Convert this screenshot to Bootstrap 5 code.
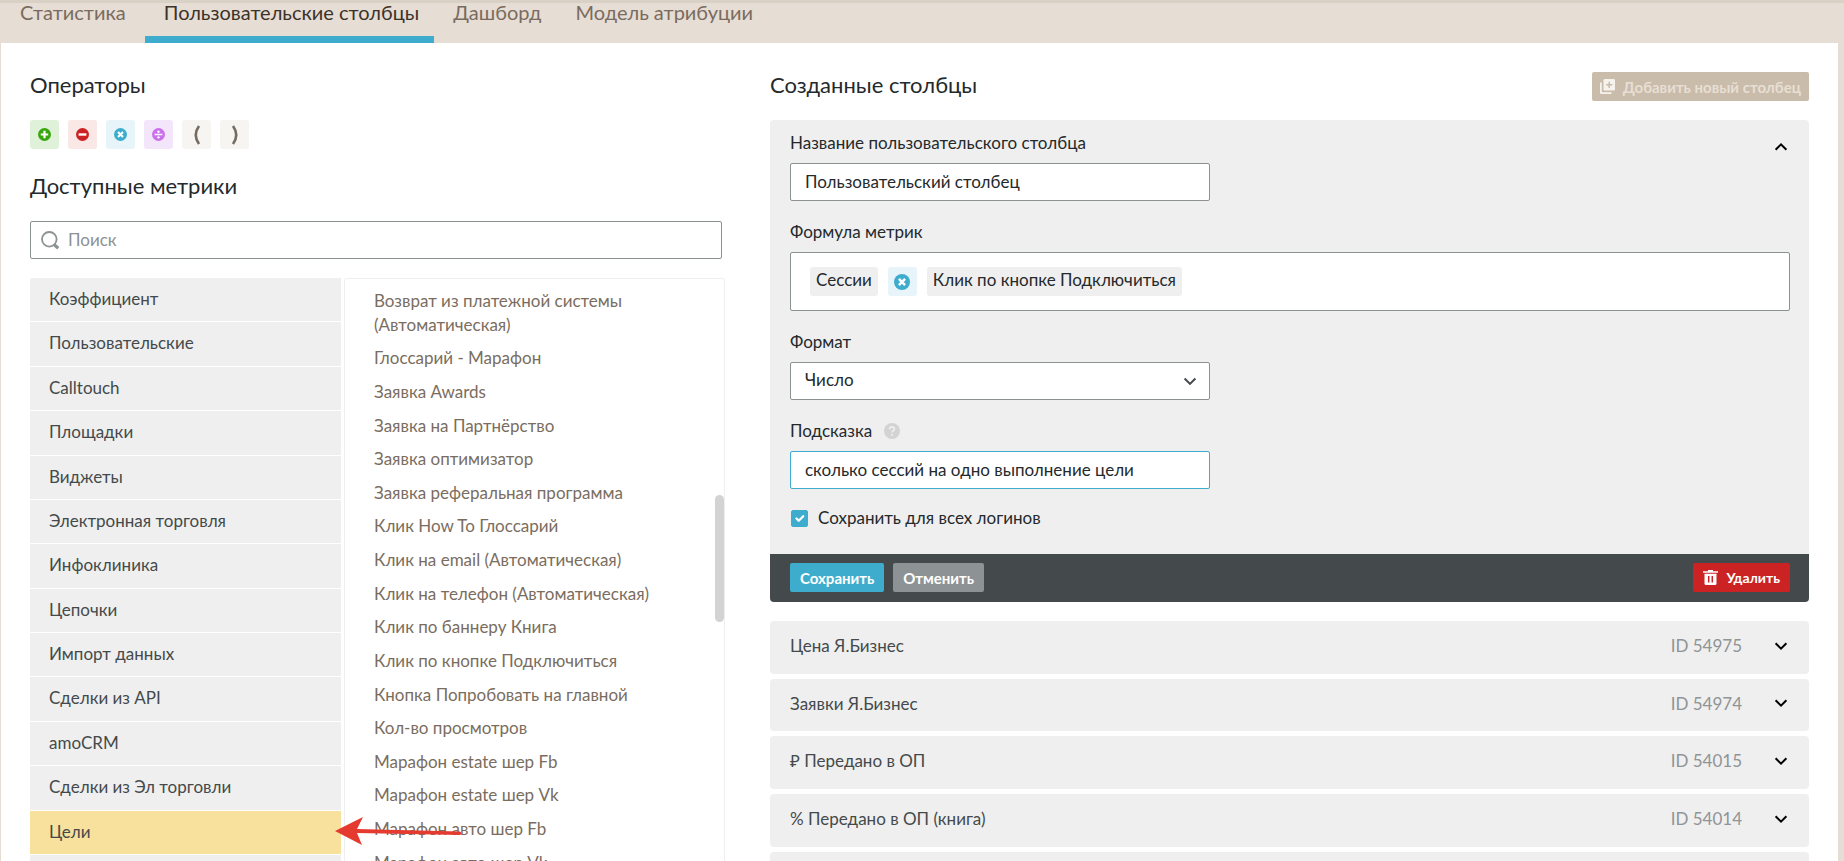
<!DOCTYPE html>
<html lang="ru">
<head>
<meta charset="utf-8">
<meta name="viewport" content="width=device-width, initial-scale=1">
<title>Пользовательские столбцы</title>
<link href="https://cdn.jsdelivr.net/npm/bootstrap@5.3.0/dist/css/bootstrap.min.css" rel="stylesheet">
<style>
  :root { --beige: #e6ddd4; --accent: #3eadcd; --soft: #efefef; --dark: #444a4b; }
  body { font-family: Lato, "Noto Sans", sans-serif; font-size: 17px; line-height: 24px; color: #24292c; background: var(--beige); }
  .top-tabs { border-top: 3px solid #dad1c6; height: 43px; font-size: 20px; line-height: 18px; }
  .top-tabs a { color: #7a6b5e; padding: 0 15px 0 19px; border-bottom: 7px solid transparent; white-space: nowrap; }
  .top-tabs a:first-child { padding: 0 19px 0 20px; }
  .top-tabs a.active { color: #3d3229; border-color: var(--accent); }
  .sheet { background: #fff; margin: 0 6px 0 1px; padding: 28px 29px 0; }
  .columns { display: grid; grid-template-columns: 695fr 1039fr; gap: 45px; }
  h2 { font-size: 22px; line-height: 28px; font-weight: 400; margin: 0; }
  .ops { gap: 9px; margin: 21px 0 23px; }
  .op { width: 29px; height: 29px; border: 0; border-radius: 3px; padding: 0; display: inline-flex; align-items: center; justify-content: center; }
  .op-plus { background: #e0f1da; color: #3aa60f; }
  .op-minus { background: #f9e8e6; color: #cb2323; }
  .op-times { background: #e7f5fa; color: var(--accent); }
  .op-divide { background: #f3e6fa; color: #cb70ec; }
  .op-paren { background: #f6f5f2; color: #766b60; }

  .field { height: 38px; border: 1px solid #8c9192; border-radius: 2px; font-size: 17px; line-height: 24px; padding: 5px 14px 7px; color: #24292c; }
  .field.current { border-color: var(--accent); }
  .field::placeholder { color: #8c9192; }
  .search { margin: 21px 3px 0 0; position: relative; }
  .search svg { position: absolute; left: 11px; top: 10px; }
  .search .field { padding-left: 37px; }

  .lists { gap: 3px; margin-top: 19px; }
  .groups { width: 311px; }
  .groups li { background: var(--soft); border-bottom: 1px solid #fff; line-height: 1.375; padding: 9px 19px 11px; position: relative; }
  .groups li:first-child { border-top-left-radius: 3px; }
  .groups li:last-child { height: 44px; }
  .groups a { color: var(--dark); }
  .groups li.chosen { background: #f8e09d; }
  .pointer { position: absolute; left: calc(100% - 6px); top: 6px; z-index: 2; }
  .metrics { border: 1px solid var(--soft); border-radius: 3px; padding: 5px 29px; position: relative; }
  .metrics li { line-height: 1.39; padding: 5px 0; }
  .metrics a { color: #7a6d60; }
  .thumb { position: absolute; right: 0; top: 216px; width: 9px; height: 127px; border-radius: 5px; background: #d3d3d3; }

  .act { height: 29px; border: 0; border-radius: 2px; padding: 0 10px; font-size: 15px; line-height: 20px; font-weight: 700; color: #fff; display: inline-flex; align-items: center; white-space: nowrap; }
  .act-add { background: #cabcaa; color: #e8dfd4; margin-top: 1px; padding: 0 8px; }
  .act-add svg, .act-del svg { margin-right: 8px; }
  .act-save { background: var(--accent); }
  .act-cancel { background: #8d9294; margin-left: 9px; }
  .act-del { background: #cb2323; font-size: 14px; }

  .editor { background: var(--soft); border-radius: 4px; margin-top: 19px; overflow: hidden; }
  .editor-body { padding: 11px 19px 24px 20px; display: grid; row-gap: 19px; }
  .editor label { display: block; }
  .half { width: 42%; }
  .half > .field, .formula { margin-top: 8px; }
  .fold { border: 0; background: none; padding: 0; line-height: 0; }
  .editor .fold { margin: 9px 2px 0 0; }
  .formula { height: 59px; background: #fff; border: 1px solid #8c9192; border-radius: 2px; padding: 14px 19px; gap: 10px; }
  .chip { background: var(--soft); border-radius: 3px; height: 29px; padding: 1px 6px; }
  .form-select.field { background-image: url("data:image/svg+xml,%3Csvg xmlns='http://www.w3.org/2000/svg' viewBox='0 0 14 14'%3E%3Cpath d='M1.600 4.500L7 9.900l5.400-5.400' fill='none' stroke='%23444a4b' stroke-width='2'/%3E%3C/svg%3E"); background-size: 14px 14px; background-position: right 12px center; }
  .help { margin-left: 12px; }
  .save-all { margin-top: -2px; }
  .tick.form-check-input { width: 17px; height: 17px; margin: 0 10px 0 1px; border-radius: 2px; flex: none; }
  .tick:checked { background-color: var(--accent); border-color: var(--accent); }
  .editor-foot { background: var(--dark); padding: 9px 19px 10px 20px; }

  .saved { margin-top: 19px; display: grid; gap: 5px; }
  .saved li { background: var(--soft); color: var(--dark); border-radius: 4px; line-height: 1.39; padding: 13px 21px 16px 20px; }
  .saved .num { color: #8f9496; margin-right: 32px; }
</style>
</head>
<body class="vh-100 overflow-hidden">
<svg class="d-none" aria-hidden="true">
  <symbol id="i-plus" viewBox="0 0 12 12"><circle cx="6" cy="6" r="6" fill="currentColor"/><path d="M6 2.6v6.8M2.6 6h6.8" stroke="#fff" stroke-width="2"/></symbol>
  <symbol id="i-minus" viewBox="0 0 12 12"><circle cx="6" cy="6" r="6" fill="currentColor"/><path d="M2.4 6h7.2" stroke="#fff" stroke-width="2.2"/></symbol>
  <symbol id="i-times" viewBox="0 0 12 12"><circle cx="6" cy="6" r="6" fill="currentColor"/><path d="M3.7 3.7l4.6 4.6M8.3 3.7L3.7 8.3" stroke="#fff" stroke-width="1.9"/></symbol>
  <symbol id="i-divide" viewBox="0 0 12 12"><circle cx="6" cy="6" r="6" fill="currentColor"/><path d="M2.4 6h7.2" stroke="#fff" stroke-width="1.4"/><circle cx="6" cy="3.4" r="1.1" fill="#fff"/><circle cx="6" cy="8.6" r="1.1" fill="#fff"/></symbol>
  <symbol id="i-down" viewBox="0 0 14 14"><path d="M1.6 4.2L7 9.6l5.4-5.4" fill="none" stroke="#000" stroke-width="2"/></symbol>
  <symbol id="i-up" viewBox="0 0 14 14"><path d="M1.6 9.8L7 4.4l5.4 5.4" fill="none" stroke="#000" stroke-width="2"/></symbol>
</svg>

<nav class="top-tabs d-flex">
  <a class="text-decoration-none" href="#">Статистика</a>
  <a class="text-decoration-none active" href="#" aria-current="page">Пользовательские столбцы</a>
  <a class="text-decoration-none" href="#">Дашборд</a>
  <a class="text-decoration-none" href="#">Модель атрибуции</a>
</nav>

<main class="sheet min-vh-100">
  <div class="columns">
    <section>
      <h2>Операторы</h2>
      <div class="ops d-flex">
        <button type="button" class="op op-plus" aria-label="Плюс"><svg width="13" height="13"><use href="#i-plus"/></svg></button>
        <button type="button" class="op op-minus" aria-label="Минус"><svg width="13" height="13"><use href="#i-minus"/></svg></button>
        <button type="button" class="op op-times" aria-label="Умножить"><svg width="13" height="13"><use href="#i-times"/></svg></button>
        <button type="button" class="op op-divide" aria-label="Разделить"><svg width="13" height="13"><use href="#i-divide"/></svg></button>
        <button type="button" class="op op-paren" aria-label="Открыть скобку"><svg width="8" height="20" viewBox="0 0 8 20"><path d="M6 1Q-.5 10 6 19" fill="none" stroke="currentColor" stroke-width="2.6"/></svg></button>
        <button type="button" class="op op-paren" aria-label="Закрыть скобку"><svg width="8" height="20" viewBox="0 0 8 20"><path d="M2 1q6.5 9 0 18" fill="none" stroke="currentColor" stroke-width="2.6"/></svg></button>
      </div>
      <h2>Доступные метрики</h2>
      <div class="search">
        <svg width="19" height="19" viewBox="0 0 19 19" fill="none" stroke="#8c9192"><circle cx="8.3" cy="8.3" r="7.3" stroke-width="1.8"/><path d="M13.2 13.6l4 3.6" stroke-width="3.2"/></svg>
        <input class="form-control field" type="search" placeholder="Поиск" aria-label="Поиск">
      </div>
      <div class="lists d-flex">
        <ul class="groups list-unstyled flex-shrink-0 mb-0">
          <li><a class="text-decoration-none" href="#">Коэффициент</a></li>
          <li><a class="text-decoration-none" href="#">Пользовательские</a></li>
          <li><a class="text-decoration-none" href="#">Calltouch</a></li>
          <li><a class="text-decoration-none" href="#">Площадки</a></li>
          <li><a class="text-decoration-none" href="#">Виджеты</a></li>
          <li><a class="text-decoration-none" href="#">Электронная торговля</a></li>
          <li><a class="text-decoration-none" href="#">Инфоклиника</a></li>
          <li><a class="text-decoration-none" href="#">Цепочки</a></li>
          <li><a class="text-decoration-none" href="#">Импорт данных</a></li>
          <li><a class="text-decoration-none" href="#">Сделки из API</a></li>
          <li><a class="text-decoration-none" href="#">amoCRM</a></li>
          <li><a class="text-decoration-none" href="#">Сделки из Эл торговли</a></li>
          <li class="chosen"><a class="text-decoration-none" href="#">Цели</a>
            <svg class="pointer" width="128" height="28" viewBox="0 0 128 28" fill="#e53a30" aria-hidden="true"><path d="M0 14L28 0l-6 12 103 2.500q3 1.800 0 3.500L22 16l5 12z"/></svg>
          </li>
          <li></li>
        </ul>
        <div class="metrics flex-grow-1">
          <ul class="list-unstyled mb-0">
            <li><a class="text-decoration-none" href="#">Возврат из платежной системы<br>(Автоматическая)</a></li>
            <li><a class="text-decoration-none" href="#">Глоссарий - Марафон</a></li>
            <li><a class="text-decoration-none" href="#">Заявка Awards</a></li>
            <li><a class="text-decoration-none" href="#">Заявка на Партнёрство</a></li>
            <li><a class="text-decoration-none" href="#">Заявка оптимизатор</a></li>
            <li><a class="text-decoration-none" href="#">Заявка реферальная программа</a></li>
            <li><a class="text-decoration-none" href="#">Клик How To Глоссарий</a></li>
            <li><a class="text-decoration-none" href="#">Клик на email (Автоматическая)</a></li>
            <li><a class="text-decoration-none" href="#">Клик на телефон (Автоматическая)</a></li>
            <li><a class="text-decoration-none" href="#">Клик по баннеру Книга</a></li>
            <li><a class="text-decoration-none" href="#">Клик по кнопке Подключиться</a></li>
            <li><a class="text-decoration-none" href="#">Кнопка Попробовать на главной</a></li>
            <li><a class="text-decoration-none" href="#">Кол-во просмотров</a></li>
            <li><a class="text-decoration-none" href="#">Марафон estate шер Fb</a></li>
            <li><a class="text-decoration-none" href="#">Марафон estate шер Vk</a></li>
            <li><a class="text-decoration-none" href="#">Марафон авто шер Fb</a></li>
            <li><a class="text-decoration-none" href="#">Марафон авто шер Vk</a></li>
          </ul>
          <div class="thumb"></div>
        </div>
      </div>
    </section>

    <section>
      <div class="d-flex justify-content-between">
        <h2>Созданные столбцы</h2>
        <button type="button" class="act act-add"><svg width="15" height="15" viewBox="0 0 15 15"><path d="M0 3.500h1.800v9.700h9.700V15H1.500Q0 15 0 13.500z" fill="#f6f2ed"/><rect x="3.500" width="11.500" height="11.500" rx="1.300" fill="#f6f2ed"/><path d="M9.200 2.700v6.200M6.100 5.800h6.200" stroke="#cabcaa" stroke-width="1.500"/></svg>Добавить новый столбец</button>
      </div>

      <form class="editor" onsubmit="return false">
        <div class="editor-body">
          <div class="d-flex justify-content-between">
            <div class="half">
              <label for="col-name">Название пользовательского столбца</label>
              <input id="col-name" class="form-control field" type="text" value="Пользовательский столбец">
            </div>
            <button type="button" class="fold align-self-start" aria-label="Свернуть"><svg width="14" height="14"><use href="#i-up"/></svg></button>
          </div>
          <div>
            <div>Формула метрик</div>
            <div class="formula d-flex">
              <span class="chip">Сессии</span>
              <span class="op op-times"><svg width="16" height="16"><use href="#i-times"/></svg></span>
              <span class="chip">Клик по кнопке Подключиться</span>
            </div>
          </div>
          <div class="half">
            <label for="col-format">Формат</label>
            <select id="col-format" class="form-select field"><option>Число</option></select>
          </div>
          <div class="half">
            <label for="col-hint" class="d-flex align-items-center">Подсказка
              <svg class="help" width="16" height="16" viewBox="0 0 16 16"><circle cx="8" cy="8" r="8" fill="#d3d3d3"/><path d="M5.600 6.300q0-2.500 2.400-2.500t2.400 2.100q0 1.100-1.200 1.800T8 9.600" fill="none" stroke="#efefef" stroke-width="1.700"/><circle cx="8" cy="12" r="1.100" fill="#efefef"/></svg>
            </label>
            <input id="col-hint" class="form-control field current" type="text" value="сколько сессий на одно выполнение цели">
          </div>
          <div class="save-all d-flex align-items-center">
            <input id="col-all" class="form-check-input tick" type="checkbox" checked>
            <label for="col-all">Сохранить для всех логинов</label>
          </div>
        </div>
        <div class="editor-foot d-flex">
          <button type="submit" class="act act-save">Сохранить</button>
          <button type="button" class="act act-cancel">Отменить</button>
          <button type="button" class="act act-del ms-auto"><svg width="15" height="15" viewBox="0 0 15 15" fill="#fff"><path d="M5 0h5v1.200h5v1.600H0V1.200h5z"/><path d="M1.500 3.800h12v9.700q0 1.500-1.500 1.500H3q-1.500 0-1.500-1.500z"/><path d="M5.700 6v6.500M9.300 6v6.500" stroke="#cb2323" stroke-width="1.500"/></svg>Удалить</button>
        </div>
      </form>

      <ul class="saved list-unstyled mb-0">
        <li class="d-flex align-items-center"><span class="me-auto">Цена Я.Бизнес</span><span class="num">ID 54975</span><button type="button" class="fold" aria-label="Развернуть"><svg width="14" height="14"><use href="#i-down"/></svg></button></li>
        <li class="d-flex align-items-center"><span class="me-auto">Заявки Я.Бизнес</span><span class="num">ID 54974</span><button type="button" class="fold" aria-label="Развернуть"><svg width="14" height="14"><use href="#i-down"/></svg></button></li>
        <li class="d-flex align-items-center"><span class="me-auto">₽ Передано в ОП</span><span class="num">ID 54015</span><button type="button" class="fold" aria-label="Развернуть"><svg width="14" height="14"><use href="#i-down"/></svg></button></li>
        <li class="d-flex align-items-center"><span class="me-auto">% Передано в ОП (книга)</span><span class="num">ID 54014</span><button type="button" class="fold" aria-label="Развернуть"><svg width="14" height="14"><use href="#i-down"/></svg></button></li>
        <li></li>
      </ul>
    </section>
  </div>
</main>
<script src="https://cdn.jsdelivr.net/npm/bootstrap@5.3.0/dist/js/bootstrap.bundle.min.js"></script>
</body>
</html>
